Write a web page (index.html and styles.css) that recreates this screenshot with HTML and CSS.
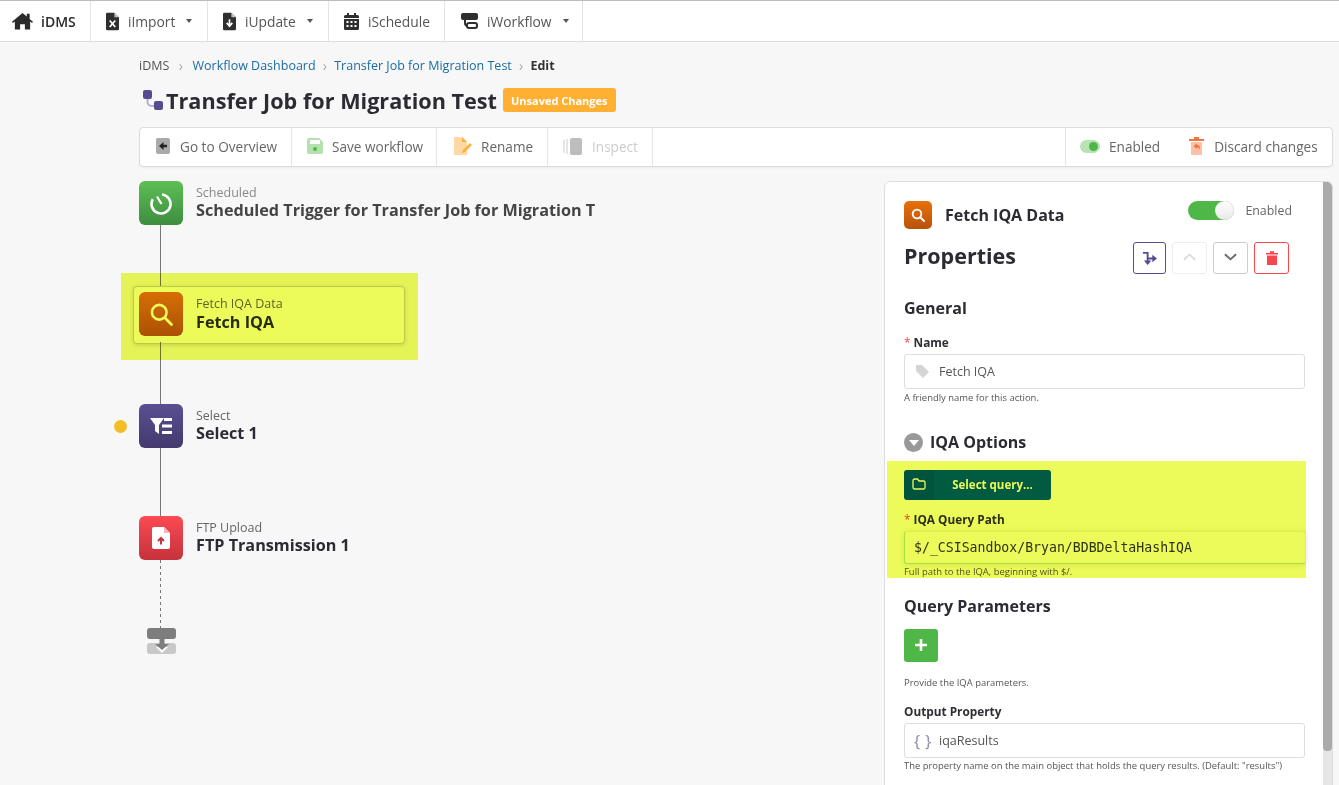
FILE: index.html
```html
<!DOCTYPE html>
<html lang="en">
<head>
<meta charset="utf-8">
<title>Transfer Job for Migration Test</title>
<link rel="stylesheet" href="styles.css">
</head>
<body>
<header class="topbar">
  <nav class="nav">
    <a class="nav-item nav-home"><svg class="nav-icon home-icon" viewBox="0 0 22 18"><path d="M11 .6L15.500 4.400V1.500h3v5.400L22 9.900l-1 1.200-2-1.600V18h-5.500v-5.500h-5V18H3V9.500l-2 1.600-1-1.200Z" fill="#2b2b2b"/></svg><span>iDMS</span></a>
    <a class="nav-item nav-import"><svg class="nav-icon file-icon" viewBox="0 0 14 19"><path d="M1.500 0H9l5 5v12.500a1.500 1.500 0 0 1-1.500 1.500h-11A1.500 1.500 0 0 1 0 17.500V1.500A1.500 1.500 0 0 1 1.500 0Z" fill="#2f2f2f"/><path d="M9 0v5h5Z" fill="#fff" opacity=".7"/><path d="M4 8.500l6 7M10 8.500l-6 7" stroke="#fff" stroke-width="1.800"/></svg><span>iImport</span><i class="caret"></i></a>
    <a class="nav-item nav-update"><svg class="nav-icon file-icon" viewBox="0 0 14 19"><path d="M1.500 0H9l5 5v12.500a1.500 1.500 0 0 1-1.500 1.500h-11A1.500 1.500 0 0 1 0 17.500V1.500A1.500 1.500 0 0 1 1.500 0Z" fill="#2f2f2f"/><path d="M9 0v5h5Z" fill="#fff" opacity=".7"/><path d="M7 7v6M4 11l3 3.500 3-3.500" stroke="#fff" stroke-width="1.800" fill="none"/></svg><span>iUpdate</span><i class="caret"></i></a>
    <a class="nav-item nav-schedule"><svg class="nav-icon cal-icon" viewBox="0 0 15 17"><path d="M3 0h2v2h5V0h2v2h1.500A1.500 1.500 0 0 1 15 3.500V5H0V3.500A1.500 1.500 0 0 1 1.500 2H3ZM0 6h15v9.500a1.500 1.500 0 0 1-1.500 1.500h-12A1.500 1.500 0 0 1 0 15.500Z" fill="#2f2f2f"/><path d="M2.500 8h2v2h-2zM6.500 8h2v2h-2zM10.500 8h2v2h-2zM2.500 12h2v2h-2zM6.500 12h2v2h-2zM10.500 12h2v2h-2z" fill="#fff"/></svg><span>iSchedule</span></a>
    <a class="nav-item nav-workflow"><svg class="nav-icon flow-icon" viewBox="0 0 17 16"><rect width="17" height="7" rx="2" fill="#2f2f2f"/><rect x="6" y="10" width="10" height="5" rx="2" fill="none" stroke="#2f2f2f" stroke-width="2"/><path d="M4 6v4a3 3 0 0 0 3 3" fill="none" stroke="#2f2f2f" stroke-width="2"/></svg><span>iWorkflow</span><i class="caret"></i></a>
  </nav>
</header>

<main class="page">
  <ol class="crumbs">
    <li>iDMS</li>
    <li class="sep sep-first">›</li>
    <li><a>Workflow Dashboard</a></li>
    <li class="sep">›</li>
    <li><a>Transfer Job for Migration Test</a></li>
    <li class="sep">›</li>
    <li class="current">Edit</li>
  </ol>

  <div class="title-row">
    <svg class="title-icon" viewBox="0 0 20 20"><path d="M4.500 6v6a4 4 0 0 0 4 4h4" fill="none" stroke="#b3aecb" stroke-width="2"/><rect width="9" height="9" rx="2" fill="#574b90"/><rect x="11" y="11" width="9" height="9" rx="2" fill="#574b90"/></svg>
    <h1>Transfer Job for Migration Test</h1>
    <span class="badge">Unsaved Changes</span>
  </div>

  <div class="toolbar">
    <button class="tool tool-overview"><svg class="tool-icon" viewBox="0 0 14 16"><rect width="14" height="16" rx="2" fill="#aaa"/><path d="M3 8l4.500-4v2.700H11v2.600H7.500V12Z" fill="#222"/></svg>Go to Overview</button>
    <button class="tool tool-save"><svg class="tool-icon" viewBox="0 0 16 16"><path d="M2 0h10l4 4v10a2 2 0 0 1-2 2H2a2 2 0 0 1-2-2V2a2 2 0 0 1 2-2Z" fill="#b3e2ae"/><rect x="3" y="2" width="10" height="4" fill="#fff"/><circle cx="8" cy="11" r="2" fill="#4fb748"/></svg>Save workflow</button>
    <button class="tool tool-rename"><svg class="tool-icon rename-icon" viewBox="0 0 20 18"><path d="M1 0h8l5 5v13H1Z" fill="#fed9a3"/><path d="M9 0v5h5Z" fill="#fbb03b"/><path d="M9 16l1-3 7-7 2 2-7 7Z" fill="#fbb03b"/></svg>Rename</button>
    <button class="tool tool-inspect"><svg class="tool-icon inspect-icon" viewBox="0 0 19 17"><rect x="7" width="12" height="17" rx="2" fill="#bdbdbd"/><path d="M1 2v13M4 1v15" stroke="#ddd" stroke-width="1.500"/></svg>Inspect</button>
    <div class="tool-right">
      <span class="tool-flat"><span class="mini-toggle"><i></i></span>Enabled</span>
      <span class="tool-flat tool-discard"><svg class="discard-icon" viewBox="0 0 15 18"><path d="M0 2h15v2H0ZM5 0h5v2H5Z" fill="#f4743b"/><path d="M2 5h11v13H2Z" fill="#fcc1a6"/><path d="M4.500 9L8 6.500v1.500c2.500 0 3.500 2 3 5-.5-2-1.200-2.500-3-2.500v1.500Z" fill="#f4743b"/></svg>Discard changes</span>
    </div>
  </div>

  <div class="columns">
    <section class="canvas">
      <div class="step step-first">
        <div class="step-icon green"><svg viewBox="0 0 24 24" class="glyph"><path d="M13 3.500A9.500 9.500 0 1 1 3.800 8.200" fill="none" stroke="#fff" stroke-width="2.600"/><path d="M8 5.500L12.500 13" stroke="#fff" stroke-width="2.200"/></svg></div>
        <div class="step-text muted"><small>Scheduled</small><strong>Scheduled Trigger for Transfer Job for Migration T</strong></div>
      </div>
      <div class="step step-active">
        <div class="step-icon orange"><svg viewBox="0 0 24 24" class="glyph glyph-lens"><circle cx="10.500" cy="10.500" r="6.300" fill="none" stroke="#fff" stroke-width="2.200"/><path d="M15.500 15.500L21 21" stroke="#fff" stroke-width="2.400" stroke-linecap="round"/></svg></div>
        <div class="step-text"><small>Fetch IQA Data</small><strong>Fetch IQA</strong></div>
      </div>
      <div class="step">
        <span class="warn-dot"></span>
        <div class="step-icon purple"><svg viewBox="0 0 24 24" class="glyph"><path d="M1 4h14l-5 7v9l-4-3v-6Z" fill="#fff"/><path d="M15 4h8v3h-8ZM13 10.500h10v3H13ZM13 17h10v3H13Z" fill="#fff"/></svg></div>
        <div class="step-text"><small>Select</small><strong>Select 1</strong></div>
      </div>
      <div class="step step-last">
        <div class="step-icon red"><svg viewBox="0 0 24 24" class="glyph"><path d="M5 1h10l6 6v14a2 2 0 0 1-2 2H5a2 2 0 0 1-2-2V3a2 2 0 0 1 2-2Z" fill="#fff"/><path d="M15 1l6 6h-6Z" fill="#f3b5b9"/><path d="M12 18.500v-6.500M9 15l3-3 3 3" stroke="#c9323c" stroke-width="2" fill="none"/></svg></div>
        <div class="step-text"><small>FTP Upload</small><strong>FTP Transmission 1</strong></div>
      </div>
      <svg class="end-icon" viewBox="0 0 30 26"><rect y="15" width="29" height="11" rx="3" fill="#c8c8c8"/><path d="M9 19h12l-6 6Z" fill="#fff"/><rect width="29" height="11" rx="3" fill="#7d7d7d"/><path d="M12.500 10h5v6H22l-7 6-7-6h4.500Z" fill="#7d7d7d"/></svg>
    </section>

    <aside class="panel">
      <div class="panel-body">
        <div class="panel-head">
          <div class="step-icon orange small"><svg viewBox="0 0 24 24" class="glyph"><circle cx="10.500" cy="10.500" r="6.500" fill="none" stroke="#fff" stroke-width="2.800"/><path d="M15.500 15.500L21 21" stroke="#fff" stroke-width="3" stroke-linecap="round"/></svg></div>
          <span class="panel-title">Fetch IQA Data</span>
          <span class="switch-wrap"><span class="switch"><i></i></span><span class="switch-label">Enabled</span></span>
        </div>

        <div class="props-row">
          <h2>Properties</h2>
          <div class="prop-btns">
            <button class="icon-btn btn-branch"><svg viewBox="0 0 16 16" class="btn-glyph"><path d="M1 2h5v9M6 8h6" fill="none" stroke="#574b90" stroke-width="2"/><path d="M11 4l5 4-5 4ZM2 10h8l-4 5Z" fill="#574b90"/></svg></button>
            <button class="icon-btn btn-up"><svg viewBox="0 0 14 8" class="chev"><path d="M1 7l6-5.500L13 7" fill="none" stroke="#ddd" stroke-width="2"/></svg></button>
            <button class="icon-btn btn-down"><svg viewBox="0 0 14 8" class="chev"><path d="M1 1l6 5.500L13 1" fill="none" stroke="#666" stroke-width="2"/></svg></button>
            <button class="icon-btn btn-trash"><svg viewBox="0 0 12 14" class="trash"><path d="M0 2h12v1.500H0ZM4 .300h4V2H4ZM1 4.500h10V14H1Z" fill="#f8454e"/></svg></button>
          </div>
        </div>

        <h3 class="sec-general">General</h3>
        <label class="field-label req lbl-name">Name</label>
        <div class="input"><svg class="input-icon tag" viewBox="0 0 14 14"><path d="M0 0h6.500L14 7.500 7.500 14 0 6.500Z" fill="#d5d5d5"/></svg><span>Fetch IQA</span></div>
        <p class="help">A friendly name for this action.</p>

        <h3 class="sec-options"><span class="disc"><i></i></span>IQA Options</h3>
        <button class="query-btn"><span class="query-ico"><svg viewBox="0 0 14 12" class="folder"><path d="M1 2.500A1.500 1.500 0 0 1 2.500 1h3l1.500 2h4.500A1.500 1.500 0 0 1 13 4.500v5a1.500 1.500 0 0 1-1.500 1.500h-9A1.500 1.500 0 0 1 1 9.500Z" fill="none" stroke="#fff" stroke-width="1.300"/></svg></span><span class="query-text">Select query...</span></button>
        <label class="field-label req lbl-path">IQA Query Path</label>
        <div class="input input-code">$/_CSISandbox/Bryan/BDBDeltaHashIQA</div>
        <p class="help help-path">Full path to the IQA, beginning with $/.</p>

        <h3 class="sec-params">Query Parameters</h3>
        <button class="add-btn" aria-label="Add"><svg viewBox="0 0 12 12" class="plus"><path d="M6 0v12M0 6h12" stroke="#fff" stroke-width="2.600"/></svg></button>
        <p class="help help-params">Provide the IQA parameters.</p>
        <label class="field-label lbl-output">Output Property</label>
        <div class="input"><span class="braces">{ }</span><span>iqaResults</span></div>
        <p class="help help-output">The property name on the main object that holds the query results. (Default: "results")</p>
      </div>
      <div class="scroll"><div class="scroll-thumb"></div></div>
    </aside>
  </div>
</main>

<div class="marker marker-step"></div>
<div class="marker marker-query"></div>
</body>
</html>
```

FILE: styles.css
```css
* { box-sizing: border-box; }
html, body { margin: 0; height: 785px; overflow: hidden; }
body {
  position: relative;
  background: #f7f7f7;
  color: #2f2f35;
  font-family: "Open Sans", "Liberation Sans", sans-serif;
  font-size: 14px;
}
h1, h2, h3, p, ol { margin: 0; padding: 0; }
button { font-family: inherit; border: 0; background: none; padding: 0; }

/* top bar */
.topbar {
  height: 42px;
  background: #fff;
  border-top: 1px solid #bbb;
  border-bottom: 1px solid #ddd;
}
.nav { display: flex; height: 100%; }
.nav-item {
  display: flex;
  align-items: center;
  height: 100%;
  border-right: 1px solid #e4e4e4;
  color: #555;
  font-size: 13.800px;
}
.nav-home { width: 91px; padding-left: 12px; gap: 8px; color: #2b2b2b; font-weight: 600; font-size: 14px; }
.nav-import { width: 117px; padding-left: 15px; }
.nav-update { width: 121px; padding-left: 15px; }
.nav-schedule { width: 116px; padding-left: 15px; }
.nav-workflow { width: 138px; padding-left: 16px; }
.nav-icon { display: block; flex: none; }
.home-icon { width: 21px; height: 18px; }
.file-icon { width: 13px; height: 19px; margin-right: 9px; }
.cal-icon { width: 15px; height: 17px; margin-right: 9px; }
.flow-icon { width: 17px; height: 16px; margin-right: 9px; }
.caret {
  width: 0; height: 0;
  margin-left: 11px;
  border: 3.500px solid transparent;
  border-top: 4px solid #555;
  border-bottom: 0;
}

/* page */
.page { padding: 0 6px 0 139px; }
.crumbs {
  display: flex;
  align-items: center;
  height: 22px;
  margin-top: 12px;
  list-style: none;
  font-size: 12.500px;
  color: #555;
}
.crumbs a { color: #1a6ba6; }
.crumbs .sep { margin: 0 7.200px; color: #aaa; font-size: 14px; }
.crumbs .sep-first { margin: 0 9.500px; }
.crumbs .current { font-weight: 700; color: #333; }

.title-row { display: flex; align-items: center; height: 32px; margin-top: 8px; }
.title-icon { width: 20px; height: 20px; margin: 0 3px 0 4px; flex: none; }
.title-row h1 { font-size: 21.650px; font-weight: 700; color: #2b2b33; white-space: nowrap; }
.badge {
  margin-left: 6px;
  height: 24px;
  padding: 0 8px;
  display: flex;
  align-items: center;
  background: #ffb033;
  border-radius: 3px;
  color: #fff;
  font-size: 11px;
  font-weight: 700;
}

.toolbar {
  display: flex;
  height: 40px;
  margin-top: 11px;
  background: #fff;
  border: 1px solid #ddd;
  border-radius: 4px;
  box-shadow: 0 1px 2px rgba(0,0,0,.05);
}
.tool {
  display: flex;
  align-items: center;
  height: 100%;
  padding-left: 16px;
  padding-bottom: 2px;
  border-right: 1px solid #e6e6e6;
  font-size: 13.600px;
  color: #666;
}
.tool-overview { width: 152px; }
.tool-save { width: 145px; padding-left: 15px; }
.tool-rename { width: 111px; padding-left: 16px; }
.tool-inspect { width: 105px; padding-left: 15px; color: #ccc; }
.tool-icon { width: 14px; height: 16px; margin-right: 10px; flex: none; }
.tool-save .tool-icon { width: 16px; height: 16px; margin-right: 9px; }
.rename-icon { width: 20px; height: 18px; margin-right: 8px; }
.tool-inspect .inspect-icon { width: 19px; height: 17px; margin-right: 10px; }
.tool-right {
  display: flex;
  align-items: center;
  margin-left: auto;
  width: 267px;
  height: 100%;
  padding-left: 14px;
  padding-bottom: 2px;
  border-left: 1px solid #e6e6e6;
  color: #666;
}
.tool-flat { display: flex; align-items: center; font-size: 13.600px; }
.mini-toggle {
  position: relative;
  width: 20px;
  height: 13px;
  margin-right: 9px;
  background: #b8e2b4;
  border-radius: 7px;
}
.mini-toggle i {
  position: absolute;
  right: 2px;
  top: 2px;
  width: 9px;
  height: 9px;
  background: #4fb748;
  border-radius: 50%;
}
.tool-discard { margin-left: 29px; }
.discard-icon { width: 15px; height: 18px; margin-right: 10px; }

/* flow canvas */
.columns { display: flex; align-items: flex-start; margin-top: 14px; }
.canvas { flex: 1; min-width: 0; }
.step {
  position: relative;
  display: flex;
  align-items: flex-start;
  gap: 13px;
  height: 112px;
}
.step-first { height: 111px; }
.step::after {
  content: "";
  position: absolute;
  left: 21px;
  top: 44px;
  bottom: 0;
  width: 1px;
  background: #777;
}
.step-last::after {
  height: 68px;
  bottom: auto;
  background: repeating-linear-gradient(#777 0 3px, transparent 3px 6px);
}
.step-active {
  width: 270px;
  margin-left: -6px;
  padding-left: 6px;
}
.step-active::before {
  content: "";
  position: absolute;
  left: 0;
  top: -6px;
  width: 270px;
  height: 56px;
  background: #fff;
  border: 1px solid #ccc;
  border-radius: 4px;
  box-shadow: 0 1px 4px rgba(0,0,0,.15);
}
.step-active::after { left: 27px; top: 50px; }
.step-active > * { position: relative; }
.step-active strong { margin-top: 1px; }
.step-icon {
  position: relative;
  z-index: 1;
  display: flex;
  align-items: center;
  justify-content: center;
  width: 44px;
  height: 44px;
  flex: none;
  border-radius: 6px;
}
.step-icon.small { width: 28px; height: 28px; border-radius: 5px; }
.green { background: linear-gradient(#5dbf55, #3e8d3f); }
.orange { background: linear-gradient(#e8700c, #b9520c); }
.purple { background: linear-gradient(#5a4f92, #443a6e); }
.red { background: linear-gradient(#fb4a53, #c5323c); }
.glyph { width: 24px; height: 24px; display: block; }
.glyph-lens { width: 28px; height: 28px; }
.small .glyph { width: 16px; height: 16px; }
.step-text { display: flex; flex-direction: column; padding-top: 4px; }
.step-text small { font-size: 12.500px; line-height: 15px; color: #666; }
.step-text strong { font-size: 16.200px; line-height: 20px; font-weight: 700; color: #2b2b33; white-space: nowrap; }
.muted strong { color: #444; }
.muted small { color: #888; }
.warn-dot {
  position: absolute;
  left: -25px;
  top: 16px;
  width: 13px;
  height: 13px;
  background: #f2bd27;
  border-radius: 50%;
}
.end-icon { display: block; width: 30px; height: 26px; margin-left: 8px; }
.step-last { height: 112px; }

/* properties panel */
.panel {
  display: flex;
  width: 449px;
  height: 640px;
  flex: none;
  background: #fff;
  border: 1px solid #ddd;
  border-radius: 6px;
  overflow: hidden;
}
.panel-body { flex: 1; min-width: 0; padding: 19px 18px 0 19px; }
.scroll { width: 9px; flex: none; background: #e6e6e6; }
.scroll-thumb { height: 569px; background: #aaa; border-radius: 0 4px 4px 4px; }

.panel-head { position: relative; display: flex; align-items: center; height: 28px; }
.panel-title { margin-left: 13px; font-size: 16px; font-weight: 700; color: #2b2b33; }
.switch-wrap { display: flex; align-items: center; margin-left: auto; margin-right: 13px; align-self: flex-start; }
.switch {
  position: relative;
  width: 46px;
  height: 19px;
  background: #4fb748;
  border-radius: 10px;
}
.switch i {
  position: absolute;
  right: 0;
  top: 0;
  width: 19px;
  height: 19px;
  background: linear-gradient(#fff, #e8e8e8);
  border-radius: 50%;
}
.switch-label { margin-left: 11px; font-size: 12.400px; color: #666; }

.props-row { display: flex; justify-content: space-between; margin-top: 12px; height: 33px; }
.props-row h2 { font-size: 21.500px; line-height: 30px; font-weight: 700; color: #2b2b33; }
.prop-btns { display: flex; gap: 6px; margin: 1px 16px 0 0; }
.icon-btn {
  display: flex;
  align-items: center;
  justify-content: center;
  width: 35px;
  height: 32px;
  background: #fff;
  border: 1px solid #ccc;
  border-radius: 3px;
}
.btn-branch { width: 33px; border-color: #574b90; }
.btn-up { border-color: #eee; }
.btn-trash { border-color: #f8454e; }
.btn-glyph { width: 15px; height: 15px; }
.chev { width: 13px; height: 8px; margin-bottom: 2px; }
.trash { width: 12px; height: 14px; }

.panel-body h3 { font-size: 16px; line-height: 22px; font-weight: 700; color: #2b2b33; }
.sec-general { margin-top: 23px; }
.field-label { display: block; font-size: 11.800px; line-height: 16px; font-weight: 700; color: #2f2f35; }
.req::before { content: "* "; color: #f8454e; font-weight: 400; }
.lbl-name { margin-top: 15px; }
.lbl-path { margin-top: 11px; }
.lbl-output { margin-top: 14px; }
.input {
  display: flex;
  align-items: center;
  height: 35px;
  margin-top: 4px;
  padding-left: 11px;
  background: #fff;
  border: 1px solid #ddd;
  border-radius: 3px;
  font-size: 12.500px;
  color: #555;
}
.input-icon { width: 13px; height: 13px; margin-right: 10px; flex: none; }
.input-code {
  height: 33px;
  margin-right: -1px;
  padding-left: 9px;
  border-color: #eef3d8 #eef3d8 #b5e5b0 #b5e5b0;
  font-family: "DejaVu Sans Mono", "Liberation Mono", monospace;
  font-size: 13.200px;
  color: #333;
  box-shadow: 0 1px 6px rgba(0,0,0,.1);
}
.braces { width: 18px; margin-right: 7px; color: #8a84ab; font-size: 16px; white-space: nowrap; letter-spacing: .5px; margin-left: -2px; }
.help { margin-top: 2px; font-size: 9.450px; line-height: 13px; color: #555; white-space: nowrap; }
.help-path { margin-top: 1px; }
.help-output { margin-top: 1px; }

.sec-options { display: flex; align-items: center; gap: 7px; margin-top: 27px; }
.disc {
  display: flex;
  align-items: center;
  justify-content: center;
  width: 19px;
  height: 19px;
  background: #999;
  border-radius: 50%;
}
.disc i {
  width: 0; height: 0;
  margin-top: 2px;
  border: 5px solid transparent;
  border-top: 6px solid #fff;
  border-bottom: 0;
}
.query-btn {
  display: flex;
  width: 147px;
  height: 30px;
  margin-top: 17px;
  background: #005cb9;
  border-radius: 3px;
  color: #fff;
  font-size: 11.500px;
  font-weight: 700;
}
.query-ico {
  display: flex;
  align-items: center;
  justify-content: center;
  width: 30px;
  height: 100%;
  background: rgba(0,0,0,.08);
  border-radius: 3px 0 0 3px;
}
.folder { width: 14px; height: 12px; margin-bottom: 2px; }
.query-text { flex: 1; line-height: 30px; text-align: center; }

.sec-params { margin-top: 17px; }
.add-btn {
  display: flex;
  align-items: center;
  justify-content: center;
  width: 34px;
  height: 33px;
  margin-top: 12px;
  background: #4fb748;
  border-radius: 3px;
}
.plus { width: 12px; height: 12px; margin-bottom: 2px; }
.help-params { margin-top: 14px; }

/* highlighter marks laid over the screenshot */
.marker {
  position: absolute;
  z-index: 5;
  background: #ecfb59;
  mix-blend-mode: multiply;
  pointer-events: none;
}
.marker-step { left: 121px; top: 273px; width: 297px; height: 87px; }
.marker-query { left: 887px; top: 461px; width: 419px; height: 117px; }
```
